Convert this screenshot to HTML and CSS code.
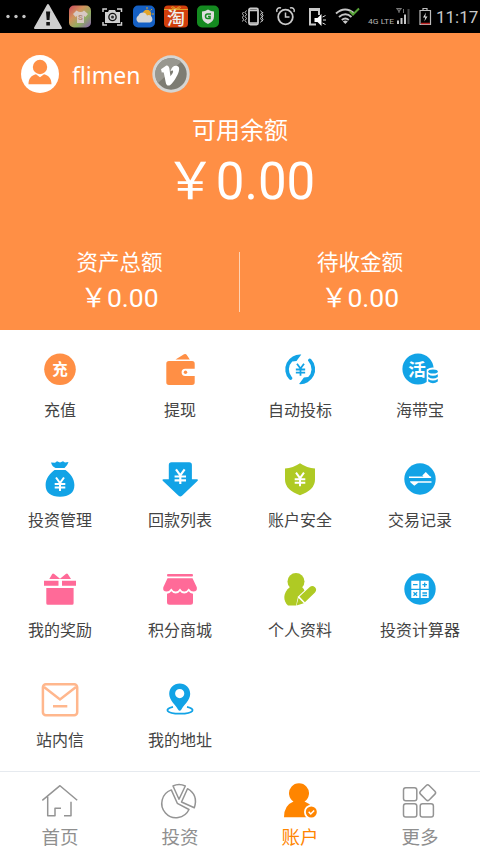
FILE: index.html
```html
<!DOCTYPE html>
<html lang="zh-CN">
<head>
<meta charset="utf-8">
<title>账户</title>
<link rel="stylesheet" href="styles.css">
</head>
<body>
<svg width="0" height="0" class="defs">
  <defs>
    <linearGradient id="rainbow" x1="0" y1="0" x2="1" y2="1"><stop offset="0" stop-color="#c8485c"/><stop offset=".35" stop-color="#d3925c"/><stop offset=".65" stop-color="#8fae62"/><stop offset="1" stop-color="#8a5fb0"/></linearGradient>
    <g id="yen" fill="none" stroke-width="2"><path d="M-4-6.5 0-1 4-6.5M0-1V7M-5.3 0H5.3M-5.3 3.6H5.3"/></g>
  </defs>
</svg>
<div class="screen">
  <div class="status">
    <svg class="status-icons" width="226" height="33" viewBox="0 0 226 33">
      <g fill="#c4c4c4"><circle cx="8" cy="16.500" r="1.700"/><circle cx="16" cy="16.500" r="1.700"/><circle cx="24" cy="16.500" r="1.700"/></g>
      <path d="M48 5 61 28H35Z" fill="#cfcfcf" stroke="#cfcfcf" stroke-width="2" stroke-linejoin="round"/>
      <path d="M46 11.500h4.200l-.7 8.500h-2.800zM46.300 22h3.600v3.500h-3.600z" fill="#111"/>
      <rect x="69" y="5.500" width="22" height="22" rx="5" fill="url(#rainbow)"/>
      <path d="M76.500 10.500 73 14l2.500 3 1.500-1v7h7v-7l1.500 1 2.500-3-4-3.500q-3 3-7.500 0Z" fill="#d8c9c3"/>
      <text x="78" y="20" font-size="8" font-weight="700" fill="#b08a75">S</text>
      <g fill="none" stroke="#d0d0d0" stroke-width="1.500"><path d="M103 12V9h4M117 9h4.500v3M103 22v3h4M117 25h4.500v-3"/></g>
      <path d="M105 12h3l1-2h6l1 2h4v11h-15z" fill="#d0d0d0"/><circle cx="112.500" cy="17" r="4.300" fill="#111"/><circle cx="112.500" cy="17" r="3" fill="#d0d0d0"/><circle cx="112.500" cy="17" r="1.500" fill="#333"/>
      <rect x="133" y="5.500" width="22" height="22" rx="5" fill="#1560c4"/>
      <circle cx="147" cy="14" r="4.300" fill="#e3a52b"/><path d="M147 7v2M152 9l-1.500 1.500M154 14h-2" stroke="#e3a52b"/>
      <path d="M138.500 22.500a4 4 0 0 1 0-7 4.500 4.500 0 0 1 8.500 0 3.700 3.700 0 0 1 3 7z" fill="#d6d6d6"/>
      <rect x="164" y="5.500" width="24" height="22" rx="4" fill="#d23f0c"/><path d="M164 9.500h24" stroke="#dfa42c"/><path d="M176 9c-5-5-7 0 0 0 7 0 5-5 0 0" fill="none" stroke="#dfa42c"/>
      <text x="167" y="25" font-size="18" font-weight="500" fill="#eee">淘</text>
      <rect x="197" y="5.500" width="22" height="22" rx="5" fill="#148a20"/>
      <path d="M208 9.500q3 2 6 2v5q0 5-6 7.500-6-2.500-6-7.500v-5q3 0 6-2z" fill="#ddd"/><path d="M211 14h-3.500q-2 0-2 2.300t2 2.300h2.500v-2h-2" fill="none" stroke="#148a20" stroke-width="1.500"/>
    </svg>
    <svg class="status-icons" width="196" height="33" viewBox="240 0 196 33">
      <g fill="none" stroke="#c9c9c9" stroke-width="1.500">
        <rect x="249" y="8.500" width="9" height="16" rx="1.500" stroke-width="1.800"/><path d="M249 10.500h9M249 23h9"/><path d="M246.500 10.500l-1.500 2 1.500 2-1.500 2 1.500 2-1.500 2 1.500 2M243.500 12l-1 1.500 1 2-1 2 1 2-1 2M260.500 10.500l1.500 2-1.500 2 1.500 2-1.500 2 1.500 2-1.500 2M263 12l-1 1.500 1 2-1 2 1 2-1 2" stroke-width="1"/>
        <circle cx="285.500" cy="17" r="7.300" stroke-width="1.800"/><path d="M285.500 12.500V17h4M277 12a3 3 0 0 1 4-4M294 12a3 3 0 0 0-4-4"/>
        <path d="M319 15V9h-9v15.500h6" stroke-width="2"/>
        <path d="M310 10h8.500" stroke-width="2"/>
      </g>
      <path d="M314.500 18h3l4-4v12l-4-4h-3z" fill="#fff"/><path d="M322.500 17l3-1.500M323 20h3M322.500 23l3 1.500" stroke="#ddd"/>
      <g fill="none" stroke="#c5c5c5" stroke-width="1.900"><path d="M336 13.500q9-8 18.500 0M339 17q6.500-5.500 12.500 0M341.800 20q3.500-3 7 0"/></g><path d="m345.300 24-2.500-2.600q2.500-1.800 5 0z" fill="#ccc"/>
      <path d="m350 11.500 3 3 6-6" fill="none" stroke="#58a538" stroke-width="2"/>
      <text x="368" y="23.500" font-size="8" textLength="26" lengthAdjust="spacingAndGlyphs" fill="#b5b5b5">4G LTE</text>
      <path d="M396.500 8.500h5l-2.500 3zM399 9v4" fill="none" stroke="#999" stroke-width=".8"/><path d="M403.500 9v4" stroke="#777"/>
      <g fill="#c8c8c8"><path d="M397 20.500h2V24h-2zM400.500 18h2v6h-2zM404 14.500h2V24h-2z"/><path d="M407.500 9h2v15h-2z" fill="#444"/></g>
      <g fill="none" stroke="#bdbdbd" stroke-width="1.200"><path d="M423 10V8.500h4V10M420 10.500h10.500v14H420z"/></g><path d="m426 12.500-3 5h2.300l-1 4 3.200-5h-2.300z" fill="#ddd"/><path d="M421 23.500h9" stroke="#b22" stroke-width="1.500"/>
    </svg>
    <span class="clock">11:17</span>
  </div>

  <header class="summary">
    <div class="user">
      <svg width="38" height="38" viewBox="0 0 38 38"><circle cx="19" cy="19" r="19" fill="#fff"/><circle cx="19" cy="12" r="7.200" fill="#ff8f45"/><path d="M7.500 29.300c0-6 3-9 7.500-10l4 3 4-3c4.500 1 7.500 4 7.500 10z" fill="#ff8f45"/></svg>
      <span class="name">flimen</span>
      <svg width="38" height="38" viewBox="0 0 38 38"><circle cx="19" cy="19" r="18.700" fill="#d5d5d3"/><circle cx="19" cy="19" r="15.700" fill="#7d7c73"/><path d="M6 28A15.700 15.700 0 0 1 29 7z" fill="#98978f"/><path d="m9 14.200 5-3.400c2.500-1 3.300 1.500 3.600 4.400l.9 6c1.800-2 3.300-4.600 2.300-5.600-.5-.5-1.300 0-2.200.4.800-3.800 3.400-5.600 5.800-5.300 4.600.5 2.600 6.800.2 10.800-2.200 4.300-4.400 7-6.600 8.700-2.300 1.200-3.800-.3-4.300-3l-1.800-9c-.3-1-.7-1.400-2-.5z" fill="#fff"/></svg>
    </div>
    <div class="available"><div class="available-label">可用余额</div><div class="available-value">￥0.00</div></div>
    <div class="totals">
      <div class="total"><div class="total-label">资产总额</div><div class="total-value">￥0.00</div></div>
      <div class="total"><div class="total-label">待收金额</div><div class="total-value">￥0.00</div></div>
    </div>
  </header>

  <main class="grid">
    <a class="item"><svg class="icon orange" viewBox="0 0 48 44"><circle cx="24" cy="22.300" r="15.800"/><text x="24" y="28" text-anchor="middle" font-size="15.500" font-weight="700" fill="#fff">充</text></svg><span>充值</span></a>
    <a class="item"><svg class="icon orange" viewBox="0 0 48 44"><path d="m19.500 12.600 8.500-5.300q1.800-1 2.800.7l3 4.600z"/><path d="M13 14h23q2.700 0 2.700 2.700v5h-9.500a3.600 3.600 0 0 0 0 7.200h9.500v6.400q0 2.700-2.700 2.700H13q-2.700 0-2.700-2.700V16.700Q10.300 14 13 14z"/><circle cx="29.500" cy="25.300" r="1.700"/></svg><span>提现</span></a>
    <a class="item"><svg class="icon blue" viewBox="0 0 48 44"><g id="half"><path d="M25.300 7.500A14.800 14.800 0 0 0 13.200 32.300Q14.800 33.700 16 32.300T15.600 29.800A11.200 11.200 0 0 1 16.200 14.500L20.500 14Z"/></g><use href="#half" transform="rotate(180 24.200 22.300)"/><g stroke="#12a3e6"><use href="#yen" transform="translate(24.500 22.500) scale(.88)"/></g></svg><span>自动投标</span></a>
    <a class="item"><svg class="icon blue" viewBox="0 0 48 44"><circle cx="22" cy="22" r="15.600"/><text x="21" y="28.500" text-anchor="middle" font-size="17.500" font-weight="700" fill="#fff">活</text><path d="M30.700 22.500q6-4 12 0V38h-12z" fill="#fff"/><ellipse cx="37" cy="24.600" rx="4.800" ry="2"/><path d="M32.200 27.300q4.800 3 9.600 0v2.700q-4.800 3-9.600 0zM32.200 32q4.800 3 9.600 0v2.500q-4.800 3.500-9.600 0z"/></svg><span>海带宝</span></a>

    <a class="item"><svg class="icon blue" viewBox="0 0 48 44"><path d="m15 5.500 4 .3 2-1.500 3 1.200 3-1.200 2 1.200 3.500-.5q-1 3.500-4 6h-9q-3.500-1.500-4.500-5.500zM18.500 13h11c5 3.500 8.900 9 8.900 15 0 8-5.400 11.700-14.400 11.700S9.600 36 9.600 28c0-6 4-11.500 8.900-15z"/><g stroke="#fff"><use href="#yen" transform="translate(24 27)"/></g></svg><span>投资管理</span></a>
    <a class="item"><svg class="icon blue" viewBox="0 0 48 44"><path d="M15.500 5.300h17.700q2.700 0 2.700 2.700v14.300h5q2 0 .5 1.700L26 38.700q-1.700 1.500-3.400 0L7 24q-1.500-1.700.5-1.700h5.300V8q0-2.700 2.700-2.700z"/><g stroke="#fff"><use href="#yen" transform="translate(24.300 19.500) scale(1.080)"/></g></svg><span>回款列表</span></a>
    <a class="item"><svg class="icon green" viewBox="0 0 48 44"><path d="M24 6.300q7 4.700 15 5.200v11q0 10.500-15 15.700Q9 33 9 22.500v-11q8-.5 15-5.200z"/><g stroke="#fff"><use href="#yen" transform="translate(24 22.200)"/></g></svg><span>账户安全</span></a>
    <a class="item"><svg class="icon blue" viewBox="0 0 48 44"><circle cx="24" cy="22" r="15.700"/><path d="M13 19.400h14.500l-1.200-.8 3.500-3.500 4.300 4.300h1v1.500H13zM14 24.200h21.500v1.500H22.300l-4 3-4-3.500z" fill="#fff"/></svg><span>交易记录</span></a>

    <a class="item"><svg class="icon pink" viewBox="0 0 48 44"><path d="m13.300 12 2.900-5q.8-1.200 2 0L24 11.700l5.800-4.700q1.200-1.200 2 0l3.200 5zM8 13.700h14.500v5H8zM26 13.700h14v5H26zM10.300 21h27.300v15.200q0 1.500-1.500 1.500H11.800q-1.500 0-1.500-1.500z"/></svg><span>我的奖励</span></a>
    <a class="item"><svg class="icon pink" viewBox="0 0 48 44"><path d="M12 7h24q1 0 1 1.300t-1 1.300H12q-1 0-1-1.300T12 7zM11.500 11.300h25l4.300 9q.8 4.300-3.500 4.300-2.800 0-4.600-3-1.700 3-4.400 3t-4.300-3q-1.600 3-4.300 3t-4.400-3q-1.800 3-4.600 3-4.300 0-3.400-4.300z"/><path d="M11 26.700q2.700-.5 4.400-2.500 1.700 2.200 4.400 2.200 2.700 0 4.200-2.200 1.500 2.200 4.200 2.200t4.400-2.200q1.600 2 4.400 2.500v8.600q0 2.500-2.500 2.500h-21Q11 37.800 11 35.300z"/></svg><span>积分商城</span></a>
    <a class="item"><svg class="icon green" viewBox="0 0 48 44"><circle cx="20" cy="14.500" r="8.500"/><path d="M14 20h12q3.500 3 3.500 8.500L20 38.500h-8C7 34 6.500 26 14 20z"/><path d="m20 39 2-9.500L34.500 18l9 7-14.500 14z" fill="#fff"/><path d="m23.500 29.500 10.300-9.600q2.700-2 5.200.4 2.300 2.600 0 5.100l-10.100 9.800zM22.500 31l5.300 5.200L20.500 38.500z"/></svg><span>个人资料</span></a>
    <a class="item"><svg class="icon blue" viewBox="0 0 48 44"><circle cx="24" cy="22" r="15.700"/><path d="M15.300 13.700h8v8h-8zM24.700 13.700h8v8h-8zM15.300 23h8v8h-8zM24.700 23h8v8h-8z" fill="#fff"/><path d="M17 17.700h4.600M26.400 17.700H31M28.700 15.400V20M17.500 25.200l3.600 3.600M21.100 25.200l-3.600 3.600M26.400 26H31M26.400 28.500H31" stroke="#12a3e6" stroke-width="1.300"/></svg><span>投资计算器</span></a>

    <a class="item"><svg class="icon" viewBox="0 0 48 44"><g fill="none" stroke="#ffb78d" stroke-width="2.500"><rect x="6.900" y="7.200" width="34.300" height="31" rx="3"/><path d="m8 10 16 12.500L40 10M17 29.200h14.300"/></g></svg><span>站内信</span></a>
    <a class="item"><svg class="icon blue" viewBox="0 0 48 44"><path fill-rule="evenodd" d="M23.700 6.500c6 0 10.500 4.500 10.500 10.400 0 6.500-7 11.500-8.800 15.600q-1.700 2.500-3.400 0c-1.800-4.100-8.800-9.100-8.800-15.600C13.200 11 17.700 6.500 23.700 6.500zm0 5.500a4.600 4.600 0 1 0 0 9.200 4.600 4.600 0 0 0 0-9.200z"/><path d="M17 29.800c-9 2-7.500 6.900 7 6.900s16-4.900 7-6.900" fill="none" stroke="#12a3e6" stroke-width="1.800"/></svg><span>我的地址</span></a>
  </main>

  <nav class="tabs">
    <a class="tab"><svg viewBox="0 0 48 44"><path d="M6.300 20.300 24 5.700l17.200 14.600M11.700 16.700v19H19v-7.400h6M35 21.700v14h-7"/></svg><span>首页</span></a>
    <a class="tab"><svg viewBox="0 0 48 44"><path d="M15.300 9.900A14.300 14.300 0 1 0 33 29.500l-11.700-6.200zM17 6q6-3 12.300 0L23 19.300zM31.500 8.700Q42.500 15 38.300 27.800l-12.800-5.800z"/></svg><span>投资</span></a>
    <a class="tab active"><svg viewBox="0 0 48 44"><path class="solid" d="M8 37.300q0-12 9.500-15.700a10 10 0 1 1 11 0Q38 25 38.500 37.300z"/><circle cx="35.300" cy="32" r="7.300" fill="#fff" stroke="none"/><circle class="solid" cx="35.300" cy="32" r="5.500"/><path d="m32.700 31.800 2 2.200 3.500-3.500" stroke="#fff"/></svg><span>账户</span></a>
    <a class="tab"><svg viewBox="0 0 48 44"><rect x="7.500" y="7.700" width="13.300" height="13" rx="2.300"/><rect x="7.500" y="23.700" width="13.300" height="13.300" rx="2.300"/><rect x="24.200" y="23.700" width="13.200" height="13.300" rx="2.300"/><rect x="25.600" y="6.600" width="12.200" height="12.200" rx="2" transform="rotate(45 31.700 12.700)"/></svg><span>更多</span></a>
  </nav>
</div>
</body>
</html>
```
FILE: styles.css
```css
* { box-sizing: border-box; }
body {
  margin: 0;
  font-family: Roboto, "Noto Sans CJK SC", sans-serif;
  background: #fff;
}
.defs { display: block; }
.screen {
  width: 480px;
  height: 853px;
  display: flex;
  flex-direction: column;
  overflow: hidden;
}
.status {
  height: 33px;
  background: #000;
  display: flex;
  align-items: center;
}
.status-icons { display: block; flex: none; }
.status-icons:nth-child(2) { margin-left: 14px; }
.clock {
  color: #c9c9c9;
  font-size: 17px;
  line-height: 33px;
  padding-top: 1px;
  white-space: nowrap;
}
.summary {
  height: 297px;
  background: #ff8f45;
  color: #fff;
  display: flex;
  flex-direction: column;
}
.user {
  display: flex;
  align-items: center;
  height: 38px;
  margin: 22px 0 0 21px;
}
.name {
  width: 93px;
  padding: 1px 0 0 13px;
  font-family: "Noto Sans", sans-serif;
  font-size: 23px;
  line-height: 38px;
}
.available { text-align: center; margin-top: 23px; }
.available-label { font-size: 24px; line-height: 30px; }
.available-value { font-size: 51px; line-height: 72px; }
.totals {
  display: flex;
  height: 60px;
  margin-top: 34px;
}
.total { width: 50%; text-align: center; }
.total:first-child { border-right: 1px solid #ffd2b3; }
.total-label { font-size: 21.5px; line-height: 22px; }
.total-value { font-size: 26.5px; line-height: 48px; }
.grid {
  height: 441px;
  display: grid;
  grid-template-columns: repeat(4, 120px);
  grid-auto-rows: 110px;
}
.item {
  padding-top: 17px;
  display: flex;
  flex-direction: column;
  align-items: center;
  color: #444;
  font-size: 16px;
  line-height: 24px;
}
.icon { width: 48px; height: 44px; margin-bottom: 8px; }
.orange { fill: #ff8f45; }
.blue { fill: #12a3e6; }
.green { fill: #afca24; }
.pink { fill: #ff6a98; }
.tabs {
  height: 82px;
  border-top: 1px solid #e6eaef;
  display: flex;
}
.tab {
  width: 120px;
  padding-top: 8px;
  display: flex;
  flex-direction: column;
  align-items: center;
  color: #8f8f8f;
  font-size: 18.5px;
  line-height: 28px;
}
.tab svg {
  width: 48px;
  height: 44px;
  fill: none;
  stroke: #949494;
  stroke-width: 1.5;
  stroke-linejoin: round;
}
.tab.active { color: #ff8500; }
.tab .solid { fill: #ff8500; stroke: none; }
```
